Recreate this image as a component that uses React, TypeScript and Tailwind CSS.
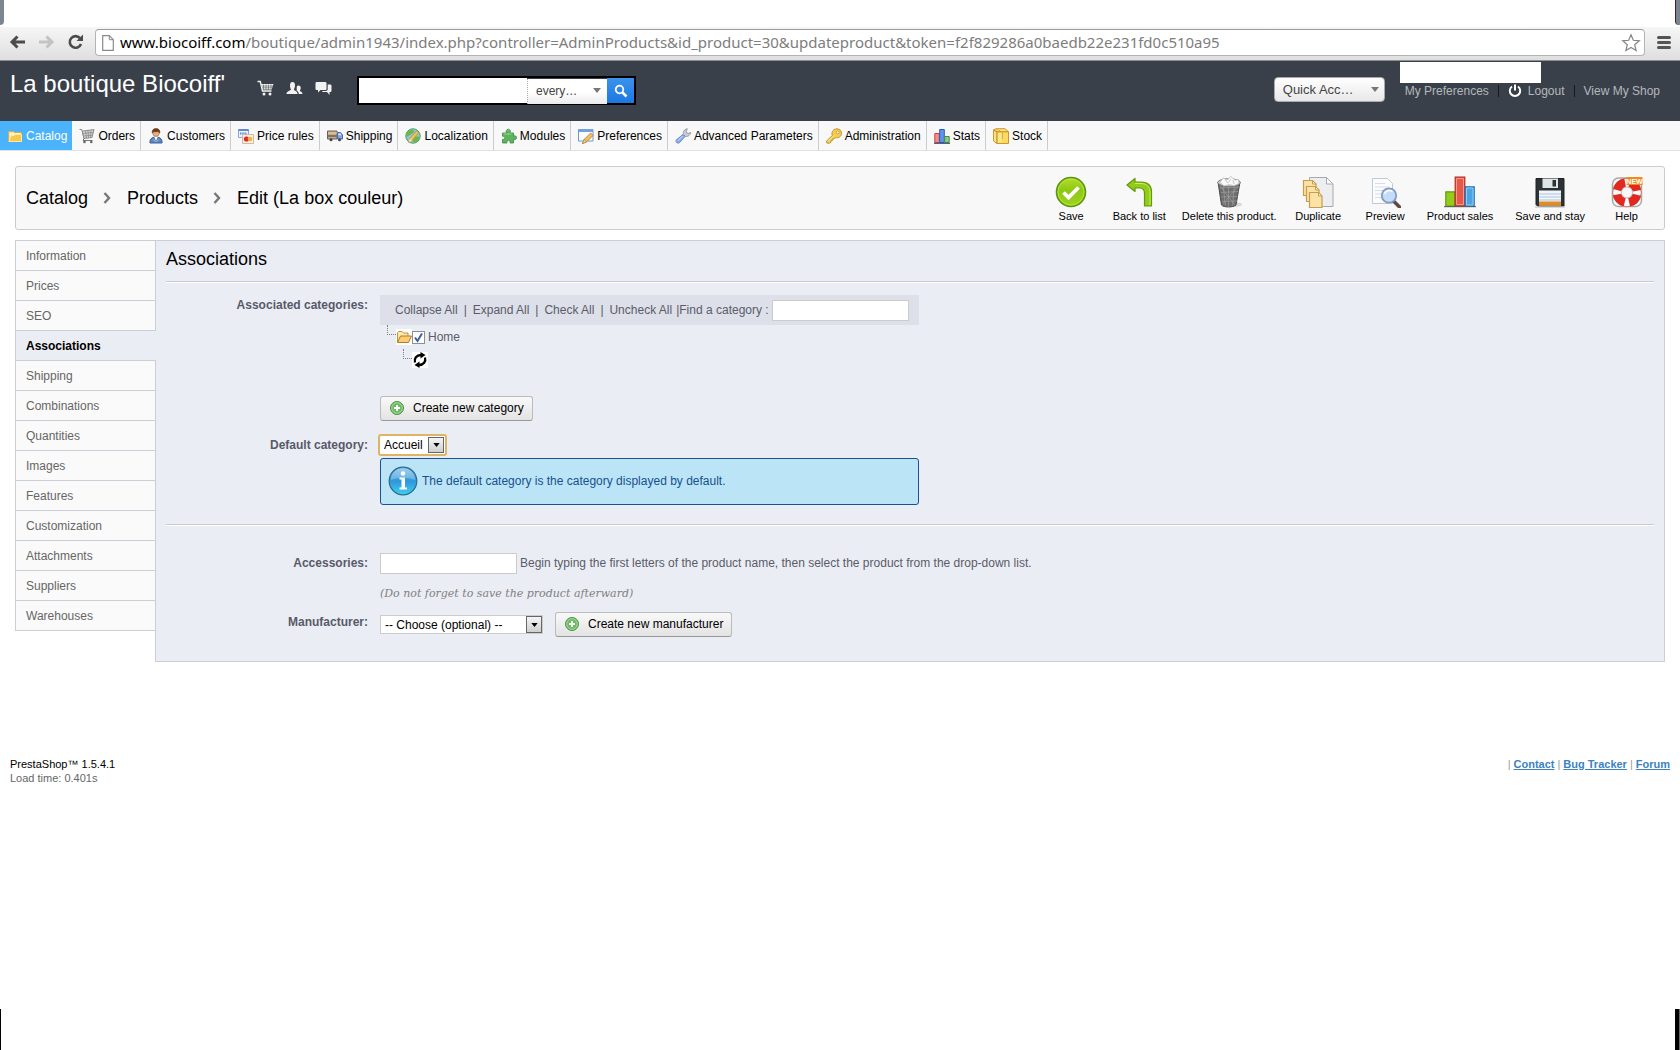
import React from 'react';

type IconProps = { className?: string };

/* ---------- small 16px menu icons ---------- */

const svg16 = 'h-4 w-4 shrink-0';

const FolderIcon = () => (
  <svg viewBox="0 0 16 16" className={svg16} aria-hidden="true">
    <path d="M1.5 3.5h5l1 1h7v9h-13z" fill="#f6e7a8" stroke="#d9a94a" />
    <path d="M3 6h10" stroke="#fffbe6" strokeWidth="1.5" />
    <path d="M2 13.5 4.2 7.5h3l1-1h6.3v7z" fill="#f9c84a" stroke="#fbe9a9" />
  </svg>
);

const CartIcon = () => (
  <svg viewBox="0 0 16 16" className={svg16} aria-hidden="true">
    <path d="M.5 1.5h2.300L5 10.500" fill="none" stroke="#858585" />
    <path d="M3.200 3.200 15 1.500l-2 8-8 1z" fill="#d3d3d3" stroke="#8b8b8b" />
    <path d="M4 5.500 14 4.500M4.500 8 13.500 7.200M6.500 3l1 7M9 2.500l.6 7.500M12 2.200l-.6 7.500" stroke="#8b8b8b" strokeWidth=".8" />
    <path d="M5 10.500 4 12.500h9.500" fill="none" stroke="#777" />
    <circle cx="5.500" cy="14" r="1.300" fill="#666" />
    <circle cx="12.300" cy="14" r="1.300" fill="#666" />
  </svg>
);

const CustomerIcon = () => (
  <svg viewBox="0 0 16 16" className={svg16} aria-hidden="true">
    <path d="M2 15c-.6-3 1.400-5.500 4-5.800h4c2.600.3 4.600 2.800 4 5.800z" fill="#5b83bd" stroke="#3f6299" />
    <path d="M6.300 9h3.400L8 12.500z" fill="#fff" />
    <path d="M5 11.500c1.500 2.200 4.500 2.200 6 0" fill="none" stroke="#a9c4ea" />
    <circle cx="8" cy="5" r="3.300" fill="#e9b07c" stroke="#a9683a" strokeWidth=".6" />
    <path d="M4.200 5C3.800 2 5.500.5 8 .5S12.300 2 11.800 5c-1-.2-1.300-1.200-1.500-1.800C8.800 4 6 4 5.500 3.500 5.200 4.300 4.800 4.800 4.200 5z" fill="#6b3a1c" stroke="#6b3a1c" strokeWidth=".6" />
  </svg>
);

const PriceIcon = () => (
  <svg viewBox="0 0 16 16" className={svg16} aria-hidden="true">
    <path d="M.5 1.500h10v8H.5z" fill="#eef3fb" stroke="#8aa8d8" />
    <path d="M.5 1h10v2H.5z" fill="#5d8ad0" />
    <path d="M2 5.500h7" stroke="#5d8ad0" strokeWidth="2" strokeDasharray="1.500 .7" />
    <path d="M4.500 6.500h11v9h-11z" fill="#fbeedd" stroke="#d3b9a3" />
    <circle cx="8.500" cy="11" r="2.600" fill="#e0262d" />
    <circle cx="12" cy="11" r="2.300" fill="#f3b13d" />
  </svg>
);

const TruckIcon = () => (
  <svg viewBox="0 0 16 16" className={svg16} aria-hidden="true">
    <path d="M.5 3h9.500v8H.5z" fill="#d0a878" stroke="#6d5f57" />
    <path d="M1 5h9" stroke="#efd0a4" />
    <path d="M1 8h9" stroke="#6f7785" strokeWidth="2" />
    <path d="M10.500 4.500h3l2 2.500v4h-5z" fill="#7ea7e0" stroke="#4a6ca8" />
    <path d="M11.500 5.500h1.800l1 1.700h-2.800z" fill="#dfeeff" />
    <circle cx="4" cy="11.800" r="1.500" fill="#444" />
    <circle cx="12.500" cy="11.800" r="1.500" fill="#444" />
  </svg>
);

const GlobeIcon = () => (
  <svg viewBox="0 0 16 16" className={svg16} aria-hidden="true">
    <circle cx="8" cy="8" r="7.200" fill="#8ac7d8" stroke="#4a9a58" />
    <path d="M3 3c2-1.500 5-1 6 0S7 6 5 7 2 9.500 1.500 8 1.500 4.500 3 3zM9 9c2-1 5-.5 5.500.5S12 14.500 9.500 14.500 7 10.500 9 9z" fill="#6cb84f" />
    <path d="M3.500 14.500 5 10.500l6.500-7.500 2 1.800L7 12.500z" fill="#f4c25a" stroke="#d58e2c" strokeWidth=".8" />
    <path d="M3.500 14.500 5 10.500l2 2z" fill="#f7e6c4" />
  </svg>
);

const ModuleIcon = () => (
  <svg viewBox="0 0 16 16" className={svg16} aria-hidden="true">
    <path
      d="M1.500 5h4c-1-2 .2-3.800 1.800-3.800S10 3 9 5h3.500v3c1.800-.8 3 .2 3 1.700s-1.300 2.500-3 1.600v3.700H9c.6-1.800-.3-2.500-1.500-2.500s-2 .9-1.500 2.500H1.500v-3.800c1.600.4 2.300-.4 2.300-1.400S3 8 1.500 8.300z"
      fill="#5cb55c"
      stroke="#3a8a41"
      strokeWidth=".8"
    />
    <path d="M2.500 6h8M6.800 2.500c.5-.6 1.200-.4 1.300.3" fill="none" stroke="#a4dca0" strokeWidth=".9" />
  </svg>
);

const PreferencesIcon = () => (
  <svg viewBox="0 0 16 16" className={svg16} aria-hidden="true">
    <path d="M.5 1.500h14.500v11.500H.5z" fill="#fbfdff" stroke="#6d98d6" />
    <path d="M.5 1h14.500v3H.5z" fill="#74a0e0" />
    <path d="M4.500 15.500 6 11.500l6.800-6.500 2.400 2.400L8.400 14z" fill="#f3bf5c" stroke="#b87b2a" strokeWidth=".8" />
    <path d="M4.500 15.500 6 11.500 8.400 14z" fill="#f6dfbc" stroke="#8a6030" strokeWidth=".5" />
  </svg>
);

const WrenchIcon = () => (
  <svg viewBox="0 0 16 16" className={svg16} aria-hidden="true">
    <path d="M8.500 6.500C7.800 3.500 9.500 1 12.500.8L11 3l.8 2 2.200.5L15.500 4c.3 3-2.500 5-5.200 4.300z" fill="#c9cdd3" stroke="#868c96" strokeWidth=".8" />
    <path d="M8 6.500 10 8.500 4.600 14.600c-2 1.600-4.700-.8-3.200-2.900z" fill="#8fb0ea" stroke="#5678c0" strokeWidth=".8" />
    <path d="M3 12.500 7.500 8" stroke="#c9dafa" />
  </svg>
);

const KeyIcon = () => (
  <svg viewBox="0 0 16 16" className={svg16} aria-hidden="true">
    <path d="M6.200 7.500C5 3.500 8 .7 11 .8c3 .1 4.700 2.200 4.500 4.800-.2 3-3 4.800-6.200 4L8 11H6.300v1.700H4.800v1.600L3 15.300.7 15v-2z" fill="#f6cd4c" stroke="#b98a22" strokeWidth=".9" />
    <circle cx="11.700" cy="4.500" r="1.400" fill="#fff" stroke="#b98a22" strokeWidth=".8" />
    <path d="M2 13.500 7 8.500" stroke="#fdeea9" />
  </svg>
);

const StatsIcon = () => (
  <svg viewBox="0 0 16 16" className={svg16} aria-hidden="true">
    <path d="M.8 5.500h4.500v9H.8z" fill="#ef8f86" stroke="#cf4238" />
    <path d="M5.700 1.500h4.600v13H5.700z" fill="#5d96ea" stroke="#2a5cb8" />
    <path d="M10.700 8.500h4.500v6h-4.500z" fill="#8fcb86" stroke="#3d9140" />
    <path d="M0 15.300h16" stroke="#2c3c66" />
  </svg>
);

const StockIcon = () => (
  <svg viewBox="0 0 16 16" className={svg16} aria-hidden="true">
    <path d="M.5 2 4 3.800V15.500L.5 13zM.5 2 3 .7h9L15.500 3.800H4z" fill="#fbe28a" stroke="#c68f1c" strokeWidth=".9" />
    <path d="M4 3.800h11.500v11.700H4z" fill="#f9da62" stroke="#c68f1c" strokeWidth=".9" />
    <path d="M9.500 4v7M3 1l6.500 3" fill="none" stroke="#dca32a" strokeWidth=".8" />
    <path d="M5 5h3.500v9.500H5z" fill="#fbe68c" />
  </svg>
);

/* ---------- 32px toolbar icons ---------- */

const svg32 = 'h-8 w-8';

const SaveBig = () => (
  <svg viewBox="0 0 32 32" className={svg32} aria-hidden="true">
    <defs>
      <linearGradient id="gSave" x1="0" y1="0" x2="0" y2="1">
        <stop offset="0" stopColor="#b4dc2a" />
        <stop offset=".45" stopColor="#8cc814" />
        <stop offset="1" stopColor="#9fd41c" />
      </linearGradient>
    </defs>
    <circle cx="16" cy="16" r="14.500" fill="url(#gSave)" stroke="#5a9410" strokeWidth="1.600" />
    <circle cx="16" cy="16" r="13" fill="none" stroke="#bfe648" strokeWidth=".8" />
    <path d="m8.500 16.500 5 5 10-10" fill="none" stroke="#fff" strokeWidth="3.800" />
  </svg>
);

const BackBig = () => (
  <svg viewBox="0 0 32 32" className={svg32} aria-hidden="true">
    <path
      d="M4 9 12 2.500v3.500h6c7 0 10.500 4 10.500 10v14h-7V17.500c0-4-1.500-5.500-5-5.500H12v3.500z"
      fill="#93cc18"
      stroke="#5d9a0c"
      strokeWidth="1.200"
      strokeLinejoin="round"
    />
    <path d="M12 7.500h6c6 0 9 3.500 9 8.500v13" fill="none" stroke="#c8ec62" />
  </svg>
);

const TrashBig = () => (
  <svg viewBox="0 0 32 32" className={svg32} aria-hidden="true">
    <ellipse cx="22" cy="28.500" rx="7" ry="2.300" fill="#d9d9d9" />
    <path d="M5 6 8.500 29c2 2.600 12 2.600 14.500 0L27 6z" fill="#6e6e6e" stroke="#4c4c4c" />
    <path d="M7 12l19-1M7.800 16.500 25.500 15.500M8.500 21 24.600 20.500M9 25.500 24 25M10 8l2.500 21.500M15.500 9v22M21.500 8l-2 22M7 10l15 19M25 10 10 28" stroke="#a5a5a5" strokeWidth=".6" />
    <ellipse cx="16" cy="6.500" rx="11.300" ry="3.800" fill="#cfcfcf" stroke="#7f7f7f" />
    <path d="M7 6.500 10 2l4 2 4-3.500 4 3.500 3.500-.5.500 4-5 2.200-5-1-5 1.300z" fill="#f8f8f8" stroke="#bcbcbc" strokeWidth=".8" />
    <path d="m12 4 3 3 3-4M20 4l1 4" fill="none" stroke="#c9c9c9" />
  </svg>
);

const DuplicateBig = () => (
  <svg viewBox="0 0 32 32" className={svg32} aria-hidden="true">
    <path d="M7.500 1.500h17l6.500 6.500v22.500H7.500z" fill="#eceeef" stroke="#a7a9ab" />
    <path d="M24.500 1.500V8H31z" fill="#fff" stroke="#a7a9ab" />
    {[[1, 4], [4, 10], [7, 16]].map(([x, y]) => (
      <g key={x} transform={`translate(${x} ${y})`}>
        <path d="M.5.5h9l3.500 3.500v11.500H.5z" fill="#fbe3a6" stroke="#c89c4e" strokeWidth="1.200" />
        <path d="M9.500.5V4H13z" fill="#fff6dc" stroke="#c89c4e" />
      </g>
    ))}
  </svg>
);

const PreviewBig = () => (
  <svg viewBox="0 0 32 32" className={svg32} aria-hidden="true">
    <path d="M3.500 2.500h15l5 5v20h-20z" fill="#fbfcfe" stroke="#c4c8d0" />
    <path d="M6 7.500h10M6 11h14M6 14.500h10M6 18h8M6 21.500h8" stroke="#d6dcea" />
    <path d="m24.500 25 6 6" stroke="#5c4a46" strokeWidth="3.500" strokeLinecap="round" />
    <circle cx="20" cy="19.500" r="7.200" fill="#c4dcf6" stroke="#8399c4" strokeWidth="1.800" />
    <path d="M15.500 18c1-3.500 5-4.500 8-2.500" fill="none" stroke="#fff" strokeWidth="1.600" />
  </svg>
);

const SalesBig = () => (
  <svg viewBox="0 0 32 32" className={svg32} aria-hidden="true">
    <path d="M1.800 15.800h9v14.400h-9z" fill="#93cc1b" stroke="#639b0c" strokeWidth="1.200" />
    <path d="M11.200 1.200h9.600v29h-9.600z" fill="#e8584a" stroke="#b62f22" strokeWidth="1.200" />
    <path d="M12.500 2.500h7v26h-7z" fill="none" stroke="#f69a8c" />
    <path d="M21.200 10.800h9v19.400h-9z" fill="#4ba4e4" stroke="#2272b4" strokeWidth="1.200" />
    <path d="M22.500 12h6.500v17h-6.500z" fill="none" stroke="#93cdf5" />
    <path d="M0 30.700h32" stroke="#555" />
  </svg>
);

const FloppyBig = () => (
  <svg viewBox="0 0 32 32" className={svg32} aria-hidden="true">
    <path d="M2 2.500h28v27.500H3.500L2 28.500z" fill="#2d3236" stroke="#1d2022" />
    <path d="M8.500 2.500h15.500v9.500H8.500z" fill="#dfe4e7" />
    <path d="M18.500 4h3.500v6.500h-3.500z" fill="#2d3236" />
    <path d="M5 14.500h22v15H5z" fill="#f2f6fb" />
    <path d="M5 18h22M5 21h22M5 24h22" stroke="#a9c6e6" />
    <path d="M5 25.500h22v4H5z" fill="#e28c1e" />
    <path d="M1 31h30" stroke="#b9b9b9" />
  </svg>
);

const HelpBig = () => (
  <svg viewBox="0 0 32 32" className={svg32} aria-hidden="true">
    <rect x="1.500" y="2" width="29" height="28.500" rx="6" fill="none" stroke="#a9a9a9" strokeWidth="1.500" />
    <circle cx="16" cy="16.500" r="10" fill="none" stroke="#fafafa" strokeWidth="9" />
    <circle cx="16" cy="16.500" r="10" fill="none" stroke="#e3291f" strokeWidth="8.500" strokeDasharray="11.200 4.500" strokeDashoffset="-2.250" />
    <circle cx="16" cy="16.500" r="14.300" fill="none" stroke="#b3281f" strokeWidth=".6" />
    <circle cx="16" cy="16.500" r="5.500" fill="#f8f8f8" stroke="#aaa" strokeWidth=".8" />
    <path d="M15.500 1h16v8h-16z" fill="#f08a1c" />
    <text x="23.500" y="7.700" textAnchor="middle" fontSize="7" fontWeight="bold" fill="#fff" fontFamily="Liberation Sans, sans-serif">NEW</text>
  </svg>
);

/* ---------- misc icons ---------- */

const PlusIcon = () => (
  <svg viewBox="0 0 16 16" className={svg16} aria-hidden="true">
    <circle cx="8" cy="8" r="6.500" fill="#6dbb63" stroke="#4a9347" />
    <circle cx="8" cy="8" r="5.300" fill="none" stroke="#b5e0a8" strokeWidth=".8" />
    <path d="M8 5v6M5 8h6" stroke="#fff" strokeWidth="2" />
  </svg>
);

const InfoIcon = () => (
  <svg viewBox="0 0 32 32" className="h-8 w-8 shrink-0" aria-hidden="true">
    <defs>
      <linearGradient id="gInfo" x1="0" y1="0" x2="0" y2="1">
        <stop offset="0" stopColor="#7fc0ea" />
        <stop offset=".5" stopColor="#2f96d8" />
        <stop offset="1" stopColor="#3fd0f2" />
      </linearGradient>
    </defs>
    <circle cx="16" cy="16" r="13.800" fill="url(#gInfo)" stroke="#2b6a92" strokeWidth="1.200" />
    <path d="M4 15C4 8 9 3.500 16 3.500S28 8 28 15c-7-3-17-3-24 0z" fill="#fff" opacity=".25" />
    <circle cx="16" cy="8.500" r="2.300" fill="#fff" />
    <path d="M12.500 12.500h5.500v10h2v2h-7.500v-2h2v-8h-2z" fill="#fff" />
  </svg>
);

const Crumb = () => (
  <svg viewBox="0 0 8 12" className="h-3 w-2" aria-hidden="true">
    <path d="m1.500 1 4.500 5-4.500 5" fill="none" stroke="#777" strokeWidth="2.400" />
  </svg>
);

const Caret = ({ className }: IconProps) => (
  <svg viewBox="0 0 8 5" className={className} aria-hidden="true">
    <path d="M0 0h8L4 5z" fill="currentColor" />
  </svg>
);

/* ---------- building blocks ---------- */

type Entry = [string, () => React.ReactElement];

const menu: Entry[] = [
  ['Catalog', FolderIcon],
  ['Orders', CartIcon],
  ['Customers', CustomerIcon],
  ['Price rules', PriceIcon],
  ['Shipping', TruckIcon],
  ['Localization', GlobeIcon],
  ['Modules', ModuleIcon],
  ['Preferences', PreferencesIcon],
  ['Advanced Parameters', WrenchIcon],
  ['Administration', KeyIcon],
  ['Stats', StatsIcon],
  ['Stock', StockIcon],
];

const actionGroups: Entry[][] = [
  [
    ['Save', SaveBig],
    ['Back to list', BackBig],
    ['Delete this product.', TrashBig],
    ['Duplicate', DuplicateBig],
    ['Preview', PreviewBig],
    ['Product sales', SalesBig],
  ],
  [
    ['Save and stay', FloppyBig],
    ['Help', HelpBig],
  ],
];

const tabs = [
  'Information', 'Prices', 'SEO', 'Associations', 'Shipping', 'Combinations', 'Quantities',
  'Images', 'Features', 'Customization', 'Attachments', 'Suppliers', 'Warehouses',
];

function BrowserBar() {
  return (
    <div>
      <div className="flex h-[27px] items-start justify-between bg-white">
        <div className="h-[25px] w-1 rounded-br-sm bg-[#7b858f]" />
        <div className="h-[25px] w-[5px] rounded-bl-sm border-l border-[#3b2226] bg-[#7b858f]" />
      </div>
      <div className="flex h-[34px] items-start border-b border-[#8f9092] bg-linear-to-b from-[#f6f6f6] to-[#dfdfdf] pt-[2px] pr-[9px] pl-[9px]">
        <div className="flex h-[26px] w-[86px] items-center gap-3">
          <button aria-label="Back">
            <svg viewBox="0 0 17 16" className="h-4 w-[17px]" aria-hidden="true">
              <path d="M8.500 2.500 3 8l5.500 5.500M3 8h13" fill="none" stroke="#4b4b4b" strokeWidth="3" />
            </svg>
          </button>
          <button aria-label="Forward">
            <svg viewBox="0 0 17 16" className="h-4 w-[17px]" aria-hidden="true">
              <path d="m8.500 2.500 5.500 5.500-5.500 5.500M14 8H1" fill="none" stroke="#c3c3c3" strokeWidth="3" />
            </svg>
          </button>
          <button aria-label="Reload">
            <svg viewBox="0 0 17 16" className="h-4 w-[17px]" aria-hidden="true">
              <path d="M13 4.200A5.800 5.800 0 1 0 14 10" fill="none" stroke="#4b4b4b" strokeWidth="2.600" />
              <path d="M16 .5V7H9.500z" fill="#4b4b4b" />
            </svg>
          </button>
        </div>
        <div className="flex h-[27px] min-w-0 flex-1 items-center rounded-sm border border-[#b3b4b5] border-t-[#9a9b9c] bg-white pr-[3px] pl-[6px]">
          <svg viewBox="0 0 12 16" className="h-4 w-3 shrink-0" aria-hidden="true">
            <path d="M.7.7h6.600l4 4v10.600H.7z" fill="#fff" stroke="#8a8a8a" strokeWidth="1.200" />
            <path d="M7.300.7v4h4" fill="none" stroke="#8a8a8a" />
          </svg>
          <div className="ml-[6px] flex-1 truncate pb-[2px] font-['Noto_Sans',sans-serif] text-[15px] leading-5 text-[#7d7d7d]">
            <span className="text-black">www.biocoiff.com</span>
            /boutique/admin1943/index.php?controller=AdminProducts&amp;id_product=30&amp;updateproduct&amp;token=f2f829286a0baedb22e231fd0c510a95
          </div>
          <button aria-label="Bookmark this page">
            <svg viewBox="0 0 20 20" className="size-5" aria-hidden="true">
              <path d="m10 1.800 2.300 5.500 6 .5-4.600 3.900 1.400 5.800L10 14.400l-5.100 3.100 1.400-5.800L1.700 7.800l6-.5z" fill="#fff" stroke="#858585" strokeWidth="1.200" />
            </svg>
          </button>
        </div>
        <button aria-label="Menu" className="ml-3 flex h-[26px] w-[14px] flex-col justify-center gap-[2px]">
          <span className="h-[3px] rounded-full bg-[#555]" />
          <span className="h-[3px] rounded-full bg-[#555]" />
          <span className="h-[3px] rounded-full bg-[#555]" />
        </button>
      </div>
    </div>
  );
}

function Header() {
  return (
    <header className="flex h-[60px] items-start bg-[#3a4049] pr-5 pl-[10px]">
      <a href="#shop" className="mt-2 w-[247px] text-[24px] leading-[30px] text-white">La boutique Biocoiff'</a>
      <div className="mt-[19px] flex gap-3">
        <a href="#new-orders" aria-label="New orders">
          <svg viewBox="0 0 17 16" className="h-4 w-[17px]" fill="#f2f2f2" aria-hidden="true">
            <path d="M.5 1.500h2.800l2.200 9.500h9" fill="none" stroke="#f2f2f2" strokeWidth="1.400" />
            <path d="M4 4h12.500L14.500 9.500H5.300z" />
            <path d="M6.500 4.500v5M9 4.500v5M11.500 4.500v5M14 4.500v4M4.500 6H16M5 7.800h10" stroke="#3a4049" strokeWidth=".5" />
            <circle cx="7" cy="14" r="1.500" />
            <circle cx="13" cy="14" r="1.500" />
          </svg>
        </a>
        <a href="#new-customers" aria-label="New customers">
          <svg viewBox="0 0 17 16" className="h-4 w-[17px]" fill="#f2f2f2" aria-hidden="true">
            <path d="M6.500 2C8.500 2 9 3.700 9 5.500S8.300 8.500 7.800 9.500c1 1.500 3.700 1.700 3.700 4.500H.5c0-2.800 3.500-3 4.500-4.500C4.500 8.500 4 7.300 4 5.500S4.500 2 6.500 2z" />
            <path d="M12.500 5.500c1.700 0 2.200 1 2.200 2.500S14 10.200 13.800 10.800c1 1 2.700 1.200 2.700 3.200h-3.700c0-2-1.300-2.800-2.300-3.700.5-.5.200-1.300.2-2.300 0-1.500.3-2.500 1.800-2.500z" />
          </svg>
        </a>
        <a href="#new-messages" aria-label="New messages">
          <svg viewBox="0 0 17 16" className="h-4 w-[17px]" fill="#f2f2f2" aria-hidden="true">
            <path d="M2 2h8c1 0 1.500.5 1.500 1.500V8.500c0 1-.5 1.500-1.500 1.500H5.500L3 12.500V10H2C1 10 .5 9.500.5 8.500v-5C.5 2.500 1 2 2 2z" />
            <path d="M12.700 4.500H15c1 0 1.500.5 1.500 1.500v4.500c0 1-.5 1.500-1.500 1.500h-.5v3L12 12H8.500C7.500 12 7 11.700 7 11h3.700c1.300 0 2-.7 2-2z" />
          </svg>
        </a>
      </div>

      <form className="mt-[15px] ml-[25px] flex h-[29px] border-2 border-black" onSubmit={(e) => e.preventDefault()}>
        <input aria-label="Search" className="w-[168px] bg-white px-2 text-xs outline-none" />
        <div className="relative w-[80px]">
          <select aria-label="Search in" className="h-full w-full appearance-none border-l border-dotted border-[#aaa] bg-linear-to-b from-50% from-white to-[#ececec] pl-2 text-xs text-[#444]">
            <option>every…</option>
          </select>
          <Caret className="pointer-events-none absolute top-[10px] right-[6px] h-[5px] w-2 text-[#777]" />
        </div>
        <button aria-label="Search" className="flex w-[27px] items-center justify-center bg-linear-to-b from-[#3b92ec] to-[#1b78e2]">
          <svg viewBox="0 0 14 14" className="size-[14px]" aria-hidden="true">
            <circle cx="5.500" cy="5.500" r="3.800" fill="none" stroke="#fff" strokeWidth="1.800" />
            <path d="m8.500 8.500 4 4" stroke="#fff" strokeWidth="2.500" />
          </svg>
        </button>
      </form>

      <div className="mt-4 ml-auto">
        <div className="relative w-[111px]">
          <select aria-label="Quick Access" className="h-[25px] w-full appearance-none rounded-[4px] border border-[#aaa] bg-linear-to-b from-white to-[#e8e8e8] pl-2 text-[13px] text-[#444]">
            <option>Quick Acc…</option>
          </select>
          <Caret className="pointer-events-none absolute top-[10px] right-[6px] h-[5px] w-2 text-[#777]" />
        </div>
      </div>
      <div className="ml-[15px] flex flex-col items-start">
        <div className="mt-px h-[21px] w-[141px] bg-white" />
        <nav className="flex h-4 items-center text-xs text-[#b4b8bd]">
          <a href="#preferences" className="ml-[5px]">My Preferences</a>
          <span className="mx-[9px] h-3 w-px bg-[#15181b]" />
          <a href="#logout" className="flex items-center gap-[6px]">
            <svg viewBox="0 0 14 14" className="size-[14px]" aria-hidden="true">
              <path d="M4 2.500a5.200 5.200 0 1 0 6 0M7 .5v6" fill="none" stroke="#fff" strokeWidth="2" />
            </svg>
            Logout
          </a>
          <span className="mx-[9px] h-3 w-px bg-[#15181b]" />
          <a href="#view-shop">View My Shop</a>
        </nav>
      </div>
    </header>
  );
}

function Label({ htmlFor, children }: { htmlFor?: string; children: React.ReactNode }) {
  return (
    <label htmlFor={htmlFor} className="w-[202px] shrink-0 pt-[2px] text-right text-xs leading-4 font-bold text-[#585a69]">
      {children}
    </label>
  );
}

function AddButton({ children }: { children: React.ReactNode }) {
  return (
    <button className="flex h-[25px] items-center gap-2 rounded-[3px] border border-[#bbb] border-b-[#999] bg-linear-to-b from-[#f9f9f9] to-[#e3e3e3] pr-2 pb-px pl-2 text-xs text-black">
      <PlusIcon />
      {children}
    </button>
  );
}

function Select({ id, children, focused }: { id: string; children: string; focused?: boolean }) {
  return (
    <div className={focused ? 'relative rounded-[1px] outline-2 outline-[#e0b465]' : 'relative w-[163px]'}>
      <select id={id} className={focused ? 'block h-[18px] w-[65px] appearance-none bg-white pl-1 text-xs text-black' : 'block h-[19px] w-full appearance-none border border-[#ccc] bg-white pl-1 text-xs text-black'}>
        <option>{children}</option>
      </select>
      <span className="pointer-events-none absolute inset-y-px right-px flex w-4 items-center justify-center border border-[#666] bg-linear-to-b from-[#f5f5f5] to-[#cfcfcf]">
        <Caret className="h-1 w-[7px] text-black" />
      </span>
    </div>
  );
}

const Rule = () => <hr className="h-[2px] border-t border-b border-t-[#c8cad0] border-b-white" />;

const Bar = () => <span className="w-[15px] text-center">|</span>;

function Associations() {
  return (
    <section className="min-w-0 flex-1 border border-[#ccced7] bg-[#ebedf4] px-[10px] pb-6 text-xs text-[#5a5c69]">
      <h1 className="pt-[6px] text-[18px] leading-6 text-black">Associations</h1>
      <div className="h-[10px]" />
      <Rule />
      <div className="mt-3 flex gap-3">
        <Label htmlFor="find">Associated categories:</Label>
        <div className="w-[539px]">
          <div className="flex h-[30px] items-center bg-[#dddfe9] pr-[10px] pl-[15px] whitespace-nowrap">
            <button>Collapse All</button>
            <Bar />
            <button>Expand All</button>
            <Bar />
            <button>Check All</button>
            <Bar />
            <button>Uncheck All</button>
            <span className="ml-1">|</span>
            <label htmlFor="find">Find a category :</label>
            <input id="find" className="ml-auto h-[21px] w-[137px] border border-[#ccc] bg-white px-1 outline-none" />
          </div>
          <ul>
            <li>
              <div className="flex h-6 items-start pl-[7px]">
                <span className="h-[10px] w-[9px] border-b border-l border-dotted border-[#808080]" />
                <span className="mt-1 bg-white">
                  <svg viewBox="0 0 16 16" className="h-4 w-4" aria-hidden="true">
                    <path d="M1.500 13V3.500l1-1h3.500l1.500 1.500h4.500V7" fill="#fde9b0" stroke="#c58e38" />
                    <path d="M1.500 13.500 4.500 7h11l-3 6.500z" fill="#f8cd74" stroke="#b57a26" />
                  </svg>
                </span>
                <label className="mt-1 flex h-4 items-center gap-[3px]">
                  <input type="checkbox" defaultChecked className="peer size-[13px] appearance-none border border-[#8a8f99] bg-white" />
                  <svg viewBox="0 0 13 13" className="pointer-events-none -ml-4 size-[13px]" aria-hidden="true">
                    <path d="m3 6.500 2.500 3.500L10 2.500" fill="none" stroke="#3f5e9c" strokeWidth="2" />
                  </svg>
                  Home
                </label>
              </div>
              <div className="flex h-6 items-start pl-[23px]">
                <span className="h-[10px] w-[9px] border-b border-l border-dotted border-[#808080]" />
                <span className="mt-[3px] bg-white">
                  <svg viewBox="0 0 16 16" className="h-4 w-4" aria-hidden="true">
                    <path d="M3 10.500C1.800 6.500 4.500 3 9 3M13 5.500c1.200 4-1.500 7.500-6 7.500" fill="none" stroke="#000" strokeWidth="2.300" />
                    <path d="M8.500 0 13.500 3l-5 3.500zM7.500 16l-5-3 5-3.500z" fill="#000" />
                  </svg>
                </span>
              </div>
            </li>
          </ul>
          <div className="mt-[23px] flex">
            <AddButton>Create new category</AddButton>
          </div>
        </div>
      </div>

      <div className="mt-[14px] flex gap-3">
        <Label htmlFor="default-category">Default category:</Label>
        <div className="w-[539px] pt-px">
          <div className="flex">
            <Select id="default-category" focused>Accueil</Select>
          </div>
          <div className="mt-1 flex h-[47px] items-center gap-[3px] rounded-[3px] border border-[#1b5190] bg-[#bbe5f7] pb-px pl-[6px] text-[#18508d]">
            <InfoIcon />
            The default category is the category displayed by default.
          </div>
        </div>
      </div>

      <div className="h-[19px]" />
      <Rule />

      <div className="mt-[27px] flex gap-3">
        <Label htmlFor="accessories">Accessories:</Label>
        <div>
          <div className="flex items-center gap-[3px]">
            <input id="accessories" className="h-[21px] w-[137px] border border-[#ccc] bg-white px-1 outline-none" />
            <span className="pb-[2px]">Begin typing the first letters of the product name, then select the product from the drop-down list.</span>
          </div>
          <p className="mt-3 font-['DejaVu_Serif',serif] text-[11px] leading-4 text-[#7f7f7f] italic">
            (Do not forget to save the product afterward)
          </p>
        </div>
      </div>

      <div className="mt-[10px] flex gap-3">
        <Label htmlFor="manufacturer">Manufacturer:</Label>
        <div className="flex items-center gap-3">
          <Select id="manufacturer">-- Choose (optional) --</Select>
          <AddButton>Create new manufacturer</AddButton>
        </div>
      </div>
    </section>
  );
}

export default function App() {
  return (
    <div className="flex min-h-screen flex-col bg-white font-['Liberation_Sans',Arial,sans-serif]">
      <BrowserBar />
      <Header />

      <nav className="flex h-[30px] border-b border-[#e2e2e2] bg-[#f8f8f8] text-xs text-black">
        {menu.map(([name, Icon], i) => (
          <a
            key={name}
            href={'#' + name}
            className={
              i === 0
                ? 'flex items-center gap-[3px] bg-[#4bb2fc] pt-px pr-[5px] pl-[7px] text-white'
                : 'flex items-center gap-[3px] border-r border-[#ccc] pt-px pr-[5px] pl-[7px]'
            }
          >
            <Icon />
            {name}
          </a>
        ))}
      </nav>

      <main className="px-[15px] pt-[15px]">
        <div className="flex h-16 items-center rounded-[3px] border border-[#ccc] bg-[#f8f8f8] pr-1 pl-[10px]">
          <div className="flex items-center text-[18px] leading-6 text-black">
            <a href="#catalog">Catalog</a>
            <span className="ml-[15px] mr-4"><Crumb /></span>
            <a href="#products">Products</a>
            <span className="ml-[15px] mr-4"><Crumb /></span>
            <span>Edit (La box couleur)</span>
          </div>
          <div className="ml-auto flex gap-[6px] pt-1">
            {actionGroups.map((group, i) => (
              <div key={i} className="flex">
                {group.map(([name, Icon]) => (
                  <button key={name} className="flex min-w-[67px] flex-col items-center px-2 text-[11px] leading-4 text-black">
                    <Icon />
                    {name}
                  </button>
                ))}
              </div>
            ))}
          </div>
        </div>

        <div className="mt-[10px] flex items-start">
          <nav className="-mr-px w-[141px] shrink-0 border-t border-l border-[#ccced7] text-xs">
            {tabs.map((t) => (
              <a
                key={t}
                href={'#' + t}
                className={
                  t === 'Associations'
                    ? 'relative flex h-[30px] items-center border-b border-[#ccced7] bg-[#ebedf4] pl-[10px] font-bold text-black'
                    : 'flex h-[30px] items-center border-b border-[#ccced7] bg-[#fafafa] pl-[10px] text-[#666]'
                }
              >
                {t}
              </a>
            ))}
          </nav>
          <Associations />
        </div>
      </main>

      <footer className="mt-[95px] flex justify-between px-[10px] text-[11px] leading-[14px]">
        <div>
          <p className="text-black">PrestaShop™ 1.5.4.1</p>
          <p className="text-[#666]">Load time: 0.401s</p>
        </div>
        <div className="flex gap-[3px] text-[#999]">
          <span>|</span>
          <a href="#contact" className="font-bold text-[#3b83c0] underline">Contact</a>
          <span>|</span>
          <a href="#bugs" className="font-bold text-[#3b83c0] underline">Bug Tracker</a>
          <span>|</span>
          <a href="#forum" className="font-bold text-[#3b83c0] underline">Forum</a>
        </div>
      </footer>

      <div className="mt-auto flex h-[41px] justify-between">
        <div className="w-px bg-black" />
        <div className="w-[5px] border-r border-[#666] bg-black" />
      </div>
    </div>
  );
}
